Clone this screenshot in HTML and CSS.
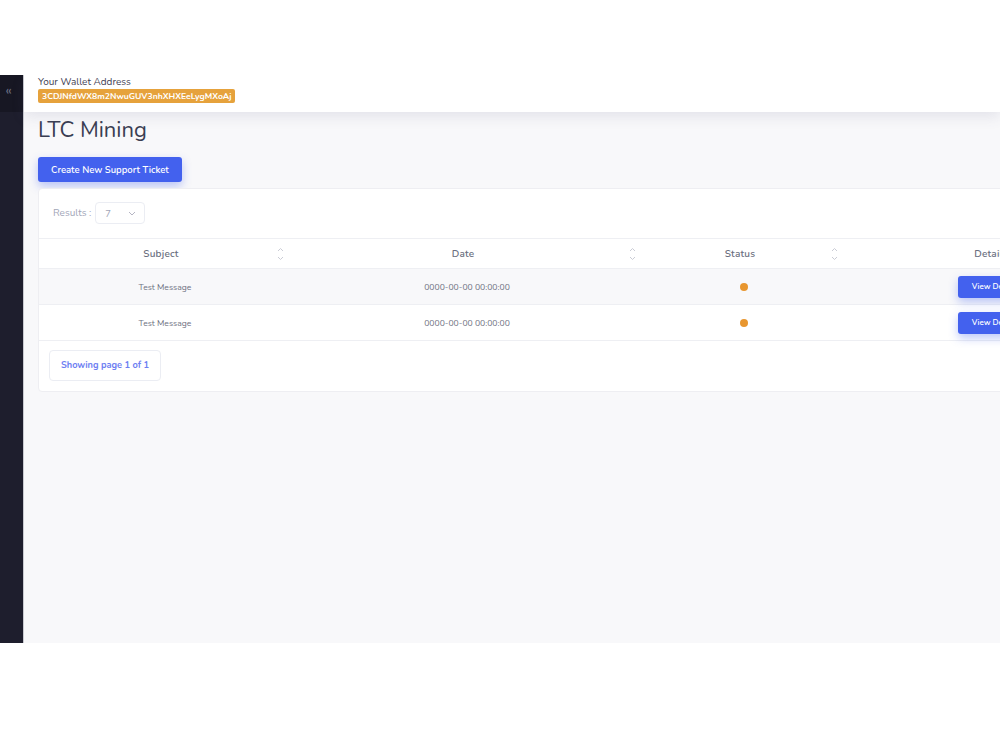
FILE: index.html
```html
<!DOCTYPE html>
<html lang="en">
<head>
<meta charset="utf-8">
<title>LTC Mining - Support</title>
<link rel="stylesheet" href="styles.css">
</head>
<body>
<div class="page">
  <div class="app">
    <aside class="sidebar">
      <div class="sidebar-top"><span class="collapse">&laquo;</span></div>
    </aside>
    <div class="main">
      <header class="topbar">
        <div class="wallet-label">Your Wallet Address</div>
        <div class="wallet-badge">3CDJNfdWX8m2NwuGUV3nhXHXEeLygMXoAj</div>
      </header>
      <section class="content">
        <h1 class="title">LTC Mining</h1>
        <button class="btn-primary">Create New Support Ticket</button>
        <div class="card">
          <div class="results">
            <span class="results-label">Results :</span>
            <div class="select"><span>7</span>
              <svg class="chev" width="8" height="5" viewBox="0 0 8 5"><path d="M1 1l3 3 3-3" fill="none" stroke="#b5b5c3" stroke-width="1"/></svg>
            </div>
          </div>
          <table class="tickets">
            <colgroup>
              <col class="c1"><col class="c2"><col class="c3"><col class="c4">
            </colgroup>
            <thead>
              <tr>
                <th><span>Subject</span><i class="sort"><svg width="7" height="14" viewBox="0 0 7 14"><path d="M1 4l2.5-2.5L6 4M1 10l2.5 2.5L6 10" fill="none" stroke="#c4c6d0" stroke-width="0.9"/></svg></i></th>
                <th><span>Date</span><i class="sort"><svg width="7" height="14" viewBox="0 0 7 14"><path d="M1 4l2.5-2.5L6 4M1 10l2.5 2.5L6 10" fill="none" stroke="#c4c6d0" stroke-width="0.9"/></svg></i></th>
                <th><span>Status</span><i class="sort"><svg width="7" height="14" viewBox="0 0 7 14"><path d="M1 4l2.5-2.5L6 4M1 10l2.5 2.5L6 10" fill="none" stroke="#c4c6d0" stroke-width="0.9"/></svg></i></th>
                <th class="th-plain"><span>Details</span></th>
              </tr>
            </thead>
            <tbody>
              <tr class="odd">
                <td>Test Message</td>
                <td>0000-00-00 00:00:00</td>
                <td><span class="dot"></span></td>
                <td><button class="btn-view">View Details</button></td>
              </tr>
              <tr>
                <td>Test Message</td>
                <td>0000-00-00 00:00:00</td>
                <td><span class="dot"></span></td>
                <td><button class="btn-view">View Details</button></td>
              </tr>
            </tbody>
          </table>
          <div class="pager">Showing page 1 of 1</div>
        </div>
      </section>
    </div>
  </div>
</div>
</body>
</html>
```

FILE: styles.css
```css
html, body {
  margin: 0;
  padding: 0;
  background: #ffffff;
}

body {
  font-family: "Nunito", "Lato", "Open Sans", sans-serif;
  color: #3f4254;
}

.page {
  padding-top: 75px;
  width: 1000px;
}

.app {
  display: flex;
  height: 568px;
  overflow: hidden;
}

/* collapsed side navigation */
.sidebar {
  width: 24px;
  flex: 0 0 24px;
  background: #1e1e2d;
  border-right: 1px solid #c9cad0;
  box-sizing: border-box;
}

.sidebar-top {
  height: 37px;
  background: #171723;
  display: flex;
  align-items: center;
  justify-content: center;
}

.collapse {
  color: #6c6f84;
  font-size: 14px;
  line-height: 1;
  margin-top: -6px;
  margin-left: -6px;
}

.main {
  flex: 1 1 auto;
  min-width: 0;
  background: #f8f8fa;
  display: flex;
  flex-direction: column;
}

.topbar {
  height: 37px;
  flex: 0 0 37px;
  background: #ffffff;
  padding: 2px 0 0 14px;
  box-sizing: border-box;
  box-shadow: 0 5px 14px rgba(80, 85, 125, 0.12);
  position: relative;
  z-index: 1;
}

.wallet-label {
  font-size: 10px;
  line-height: 11px;
  color: #3f4254;
}

.wallet-badge {
  width: max-content;
  margin-top: 1px;
  background: #e6a23c;
  color: #ffffff;
  font-size: 8.6px;
  font-weight: 700;
  line-height: 14px;
  padding: 0 4px;
  border-radius: 2px;
}

.content {
  padding: 5px 0 0 14px;
}

.title {
  margin: 0;
  font-size: 22px;
  font-weight: 400;
  line-height: 26px;
  color: #3a3e52;
}

.btn-primary {
  display: block;
  margin-top: 14px;
  height: 25px;
  padding: 0 13px;
  border: 0;
  border-radius: 3px;
  background: #4361ee;
  color: #ffffff;
  font-family: inherit;
  font-size: 9.5px;
  font-weight: 600;
  box-shadow: 0 4px 10px rgba(67, 97, 238, 0.35);
}

.card {
  margin-top: 6px;
  width: 1100px;
  background: #ffffff;
  border: 1px solid #eeeef2;
  border-radius: 4px;
  box-sizing: border-box;
  padding-bottom: 10px;
}

.results {
  display: flex;
  align-items: center;
  gap: 4px;
  padding: 13px 14px 14px;
}

.results-label {
  font-size: 10px;
  color: #a1a5b7;
}

.select {
  width: 50px;
  height: 22px;
  box-sizing: border-box;
  border: 1px solid #ebedf3;
  border-radius: 4px;
  display: flex;
  align-items: center;
  justify-content: space-between;
  padding: 0 8px 0 9px;
  font-size: 9.5px;
  color: #a1a5b7;
}

.tickets {
  width: 100%;
  border-collapse: collapse;
  table-layout: fixed;
}

.c1 { width: 252px; }
.c2 { width: 352px; }
.c3 { width: 202px; }

.tickets th {
  height: 29px;
  padding: 0;
  font-size: 10px;
  font-weight: 600;
  color: #6b6f80;
  text-align: center;
  border-top: 1px solid #eeeff3;
  border-bottom: 1px solid #eeeff3;
  position: relative;
  letter-spacing: 0.2px;
}

.tickets th span {
  margin-left: -8px;
}

.tickets th.th-plain span {
  margin-left: 0;
}

.sort {
  position: absolute;
  right: 7px;
  top: 8px;
  line-height: 0;
}

.tickets td {
  height: 35px;
  padding: 0;
  font-size: 8.6px;
  color: #6f7282;
  text-align: center;
  border-bottom: 1px solid #eeeff3;
}

.tickets tr.odd td {
  background: #f8f8fa;
}

.dot {
  display: inline-block;
  width: 8px;
  height: 8px;
  border-radius: 50%;
  background: #e8962f;
  vertical-align: middle;
}

.btn-view {
  height: 22px;
  padding: 0 14px;
  border: 0;
  border-radius: 3px;
  background: #4361ee;
  color: #ffffff;
  font-family: inherit;
  font-size: 8px;
  font-weight: 600;
  box-shadow: 0 4px 10px rgba(67, 97, 238, 0.35);
  margin-left: 8px;
}

.pager {
  display: inline-block;
  margin: 9px 0 0 10px;
  padding: 0 11px;
  height: 29px;
  line-height: 29px;
  border: 1px solid #ebedf3;
  border-radius: 4px;
  font-size: 9.2px;
  font-weight: 700;
  color: #6d7ef2;
}
```
